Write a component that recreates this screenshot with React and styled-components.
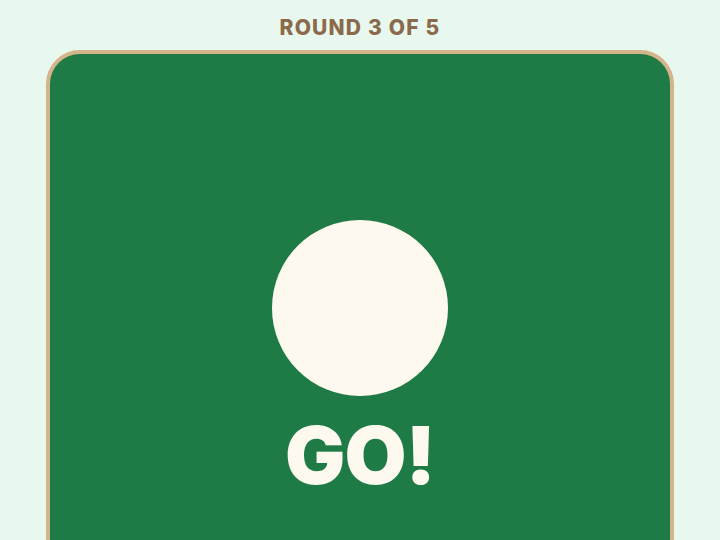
import styled, { createGlobalStyle } from "styled-components";

const Global = createGlobalStyle`
  html, body {
    margin: 0;
    background: #e8f8ee;
    font-family: Inter, "Liberation Sans", sans-serif;
  }
`

const Page = styled.div`
  height: 540px;
  overflow: hidden;
  display: flex;
  flex-direction: column;
  align-items: center;
  padding-top: 16px;
  box-sizing: border-box;
`

const Round = styled.div`
  font-size: 21px;
  font-weight: 800;
  line-height: 24px;
  letter-spacing: 1.2px;
  color: #8b6a4b;
  margin-bottom: 10px;
`

const Card = styled.div`
  width: 628px;
  height: 600px;
  flex-shrink: 0;
  box-sizing: border-box;
  background: #1e7b46;
  border: 4px solid #d5b48b;
  border-radius: 34px;
  display: flex;
  flex-direction: column;
  align-items: center;
  padding-top: 166px;
`

const Light = styled.div`
  width: 176px;
  height: 176px;
  border-radius: 50%;
  background: #fdf9ef;
`

const Label = styled.div`
  margin-top: 11px;
  font-size: 80px;
  font-weight: 900;
  line-height: 1.2;
  color: #fdf9ef;
  letter-spacing: -1px;
`

export default function App() {
  return (
    <Page>
      <Global />
      <Round>ROUND 3 OF 5</Round>
      <Card>
        <Light />
        <Label>GO!</Label>
      </Card>
    </Page>
  );
}
